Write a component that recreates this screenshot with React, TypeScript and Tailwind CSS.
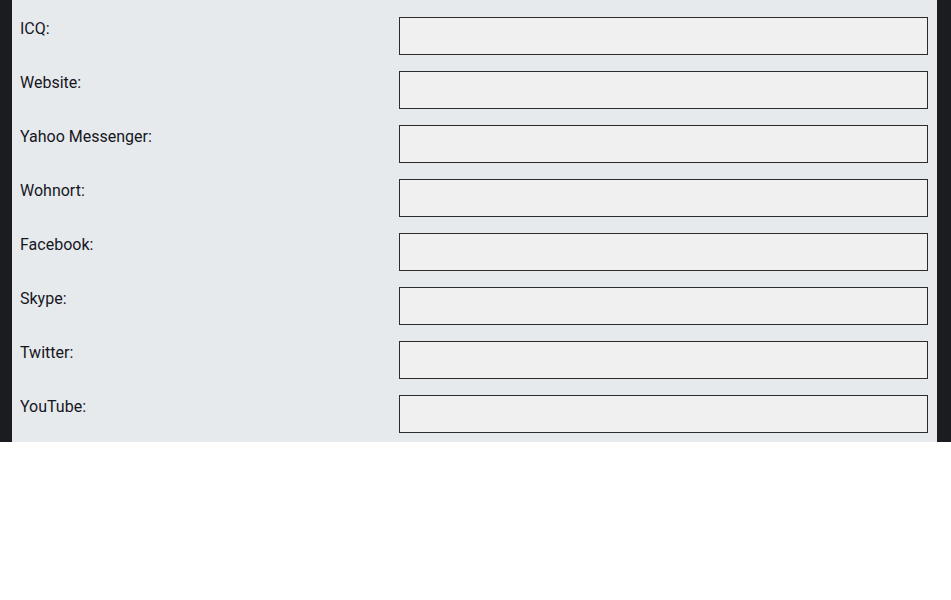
const fields = [
  "ICQ:",
  "Website:",
  "Yahoo Messenger:",
  "Wohnort:",
  "Facebook:",
  "Skype:",
  "Twitter:",
  "YouTube:",
];

export default function App() {
  return (
    <div className="bg-[#1b1c20] px-[12px] pr-[14px] font-['Roboto',sans-serif]">
      <div className="bg-[#e7eaed] pt-[17px] pb-[9px] pl-[8px] pr-[9px] flex flex-col gap-[16px]">
        {fields.map((label) => (
          <div key={label} className="flex items-start">
            <label className="flex-1 text-[16px] leading-[24px] text-[#16161f]">
              {label}
            </label>
            <input
              type="text"
              className="w-[529px] h-[38px] border border-[#2b2b2b] bg-[#f0f0f0] outline-none"
            />
          </div>
        ))}
      </div>
    </div>
  );
}
